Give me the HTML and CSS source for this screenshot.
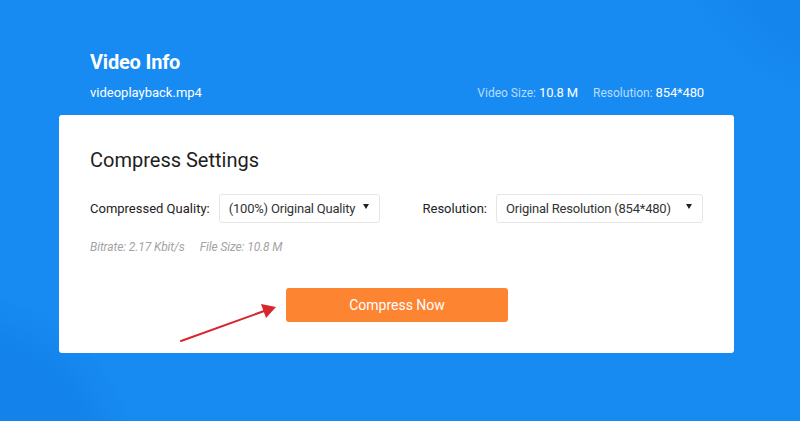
FILE: index.html
```html
<!DOCTYPE html>
<html>
<head>
<meta charset="utf-8">
<link rel="stylesheet" href="styles.css">
</head>
<body>
<div class="page">
  <div class="info">
    <h1 class="info-title">Video Info</h1>
    <div class="info-row">
      <span class="file-name">videoplayback.mp4</span>
      <div class="meta">
        <span class="meta-item"><span class="meta-label">Video Size:</span><span class="meta-value">10.8 M</span></span>
        <span class="meta-item"><span class="meta-label">Resolution:</span><span class="meta-value">854*480</span></span>
      </div>
    </div>
  </div>
  <div class="card">
    <h2 class="card-title">Compress Settings</h2>
    <div class="fields">
      <div class="field">
        <span class="field-label">Compressed Quality:</span>
        <div class="select select-quality">
          <span class="select-text">(100%) Original Quality</span>
          <span class="caret"></span>
        </div>
      </div>
      <div class="field">
        <span class="field-label">Resolution:</span>
        <div class="select select-res">
          <span class="select-text">Original Resolution (854*480)</span>
          <span class="caret"></span>
        </div>
      </div>
    </div>
    <div class="stats">
      <span class="stat">Bitrate: 2.17 Kbit/s</span>
      <span class="stat">File Size: 10.8 M</span>
    </div>
    <div class="actions">
      <button class="btn">Compress Now</button>
      <svg class="arrow" width="110" height="50" viewBox="0 0 110 50">
        <line x1="2" y1="48" x2="88" y2="17" stroke="#d8262e" stroke-width="2" stroke-linecap="round"/>
        <polygon points="97,14 82,11 87,25" fill="#d8262e"/>
      </svg>
    </div>
  </div>
</div>
</body>
</html>
```

FILE: styles.css
```css
* { box-sizing: border-box; }
html, body {
  margin: 0;
  padding: 0;
}
body {
  width: 800px;
  height: 421px;
  overflow: hidden;
  font-family: Roboto, "Liberation Sans", sans-serif;
  background:
    radial-gradient(circle at -40px 470px, rgba(10, 110, 220, 0.3) 0, rgba(10, 110, 220, 0.3) 130px, rgba(10,110,220,0) 180px),
    radial-gradient(circle at 840px -60px, rgba(10, 110, 220, 0.2) 0, rgba(10, 110, 220, 0.2) 110px, rgba(10,110,220,0) 160px),
    #178bf2;
}
.page {
  padding-top: 49px;
}
.info {
  margin-left: 90px;
  width: 614px;
  color: #fff;
}
.info-title {
  margin: 0;
  font-size: 20px;
  font-weight: 700;
  line-height: 26px;
  letter-spacing: -0.2px;
}
.info-row {
  display: flex;
  justify-content: space-between;
  align-items: center;
  margin-top: 10px;
  font-size: 13px;
  line-height: 16px;
}
.meta {
  display: flex;
  align-items: baseline;
  gap: 15px;
}
.meta-label {
  color: #b9dcff;
  font-size: 12px;
  margin-right: 3px;
}
.meta-value {
  color: #fff;
  letter-spacing: -0.15px;
}
.card {
  margin-top: 14px;
  margin-left: 59px;
  width: 675px;
  height: 238px;
  background: #fff;
  border-radius: 3px;
  padding: 33px 31px 0 31px;
}
.card-title {
  margin: 0;
  font-size: 20px;
  font-weight: 400;
  line-height: 24px;
  color: #1e1e1e;
}
.fields {
  display: flex;
  justify-content: space-between;
  margin-top: 22px;
}
.field {
  display: flex;
  align-items: center;
  gap: 9px;
}
.field-label {
  font-size: 13px;
  color: #222;
}
.select {
  display: flex;
  align-items: center;
  height: 29px;
  border: 1px solid #e6e6e6;
  border-radius: 3px;
  padding: 0 10px 0 9px;
  font-size: 13px;
  color: #333;
}
.select-text {
  flex: 1;
  white-space: nowrap;
  letter-spacing: -0.2px;
}
.select-quality { width: 161px; }
.select-res { width: 207px; }
.caret {
  flex: none;
  width: 0;
  height: 0;
  border-left: 3px solid transparent;
  border-right: 3px solid transparent;
  border-top: 5px solid #222;
  margin-top: -4px;
}
.stats {
  display: flex;
  gap: 15px;
  margin-top: 17px;
  font-size: 12px;
  font-style: italic;
  color: #a4a4a4;
  letter-spacing: -0.1px;
}
.actions {
  position: relative;
  display: flex;
  justify-content: center;
  margin-top: 34px;
  padding-left: 1px;
}
.btn {
  width: 222px;
  height: 34px;
  background: #fd8430;
  border: none;
  border-radius: 3px;
  color: #fff;
  font-family: Roboto, "Liberation Sans", sans-serif;
  font-size: 14px;
}
.arrow {
  position: absolute;
  left: 89px;
  top: 5px;
}
```
